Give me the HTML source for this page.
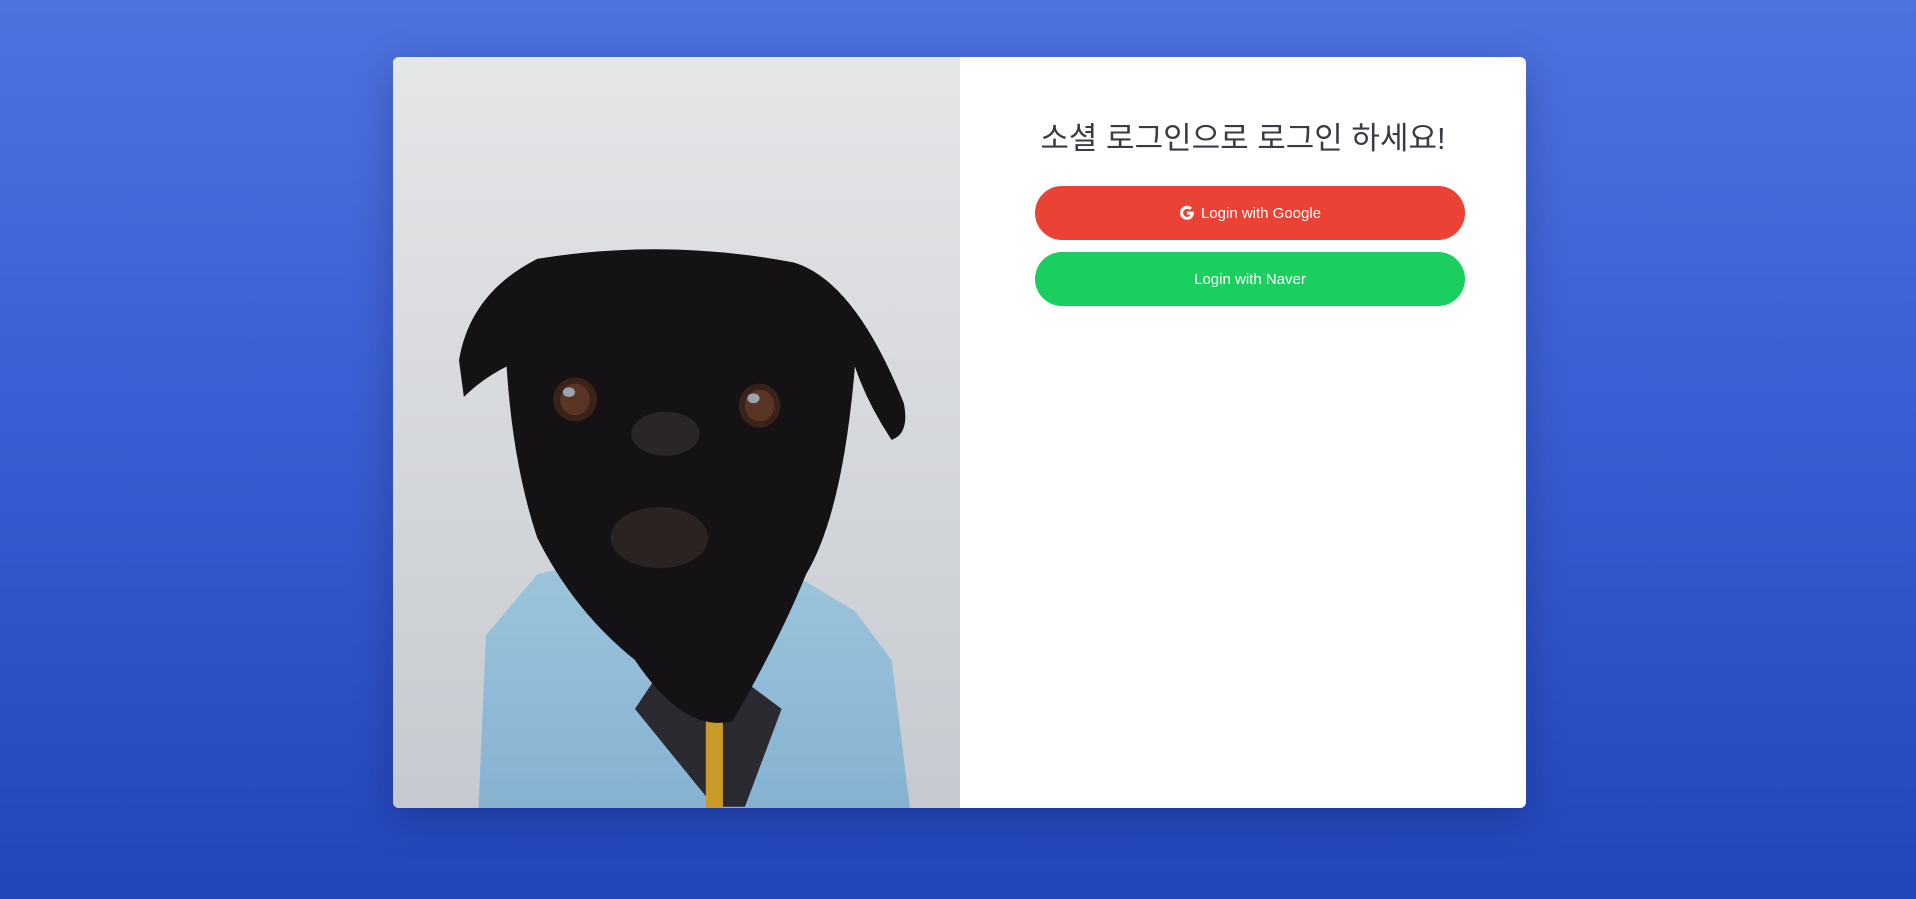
<!DOCTYPE html>
<html><head><meta charset="utf-8"><style>
html,body{margin:0;padding:0}
body{width:1916px;height:899px;background:linear-gradient(180deg,#4e73df 0%,#3a5ed3 45%,#2246b9 100%);position:relative;overflow:hidden;font-family:"Liberation Sans","Noto Sans CJK KR",sans-serif}
.card{position:absolute;left:393px;top:57px;width:1133px;height:751px;background:#fff;border-radius:6px;overflow:hidden;box-shadow:0 10px 40px rgba(0,0,40,.25)}
.img{position:absolute;left:0;top:0;width:567px;height:751px}
h1{position:absolute;left:567px;right:0;top:60px;margin:0;text-align:center;font-weight:400;font-size:31px;color:#3a3b45;line-height:44px}
.btn{position:absolute;left:642px;width:430px;height:54px;border-radius:27px;color:#fff;font-size:15px;display:flex;align-items:center;justify-content:center}
.g{top:129px;background:#ea4335}
.n{top:195px;background:#1ace5f}
</style></head><body>
<div class="card">
<svg class="img" viewBox="322 47 464 614" preserveAspectRatio="none">
<defs><linearGradient id="bg" x1="0" y1="0" x2="0" y2="1"><stop offset="0" stop-color="#e5e6e8"/><stop offset="1" stop-color="#c6cad0"/></linearGradient>
<linearGradient id="jk" x1="0" y1="0" x2="0" y2="1"><stop offset="0" stop-color="#9cc4dc"/><stop offset="1" stop-color="#86b2d2"/></linearGradient></defs>
<rect x="322" y="47" width="464" height="614" fill="url(#bg)"/>
<path d="M392 661 L398 520 L440 470 L480 460 L560 520 L650 470 L700 500 L730 540 L745 661 Z" fill="url(#jk)"/>
<path d="M560 520 L520 580 L585 660 L610 660 L640 580 Z" fill="#2a2a30"/>
<rect x="578" y="590" width="14" height="71" fill="#c99a2a"/>
<path d="M376 295 Q385 240 440 212 Q545 195 650 215 Q700 230 740 330 Q745 355 730 360 Q710 330 700 300 Q690 420 660 470 Q640 520 600 590 Q560 600 520 540 Q470 500 440 440 Q420 380 415 300 Q395 310 380 325 Z" fill="#141214"/>
<ellipse cx="471" cy="327" rx="18" ry="18" fill="#3a2218"/><ellipse cx="471" cy="327" rx="12" ry="13" fill="#5a3526"/><ellipse cx="466" cy="321" rx="5" ry="4" fill="#9aa4b0"/>
<ellipse cx="622" cy="332" rx="17" ry="18" fill="#3a2218"/><ellipse cx="622" cy="332" rx="12" ry="13" fill="#5a3526"/><ellipse cx="617" cy="326" rx="5" ry="4" fill="#9aa4b0"/>
<ellipse cx="545" cy="355" rx="28" ry="18" fill="#2a2628"/>
<ellipse cx="540" cy="440" rx="40" ry="25" fill="#2a2322"/>
</svg>
<h1>소셜 로그인으로 로그인 하세요!</h1>
<div class="btn g"><svg width="16" height="16" viewBox="0 0 16 16" style="margin-right:6px"><path d="M14.5 6.6H8v3h3.7A4 4 0 1 1 10.8 4.9l2.1-2.1A7 7 0 1 0 15 8c0-.5 0-.9-.1-1.4z" fill="#fff"/></svg>Login with Google</div>
<div class="btn n">Login with Naver</div>
</div>
</body></html>
